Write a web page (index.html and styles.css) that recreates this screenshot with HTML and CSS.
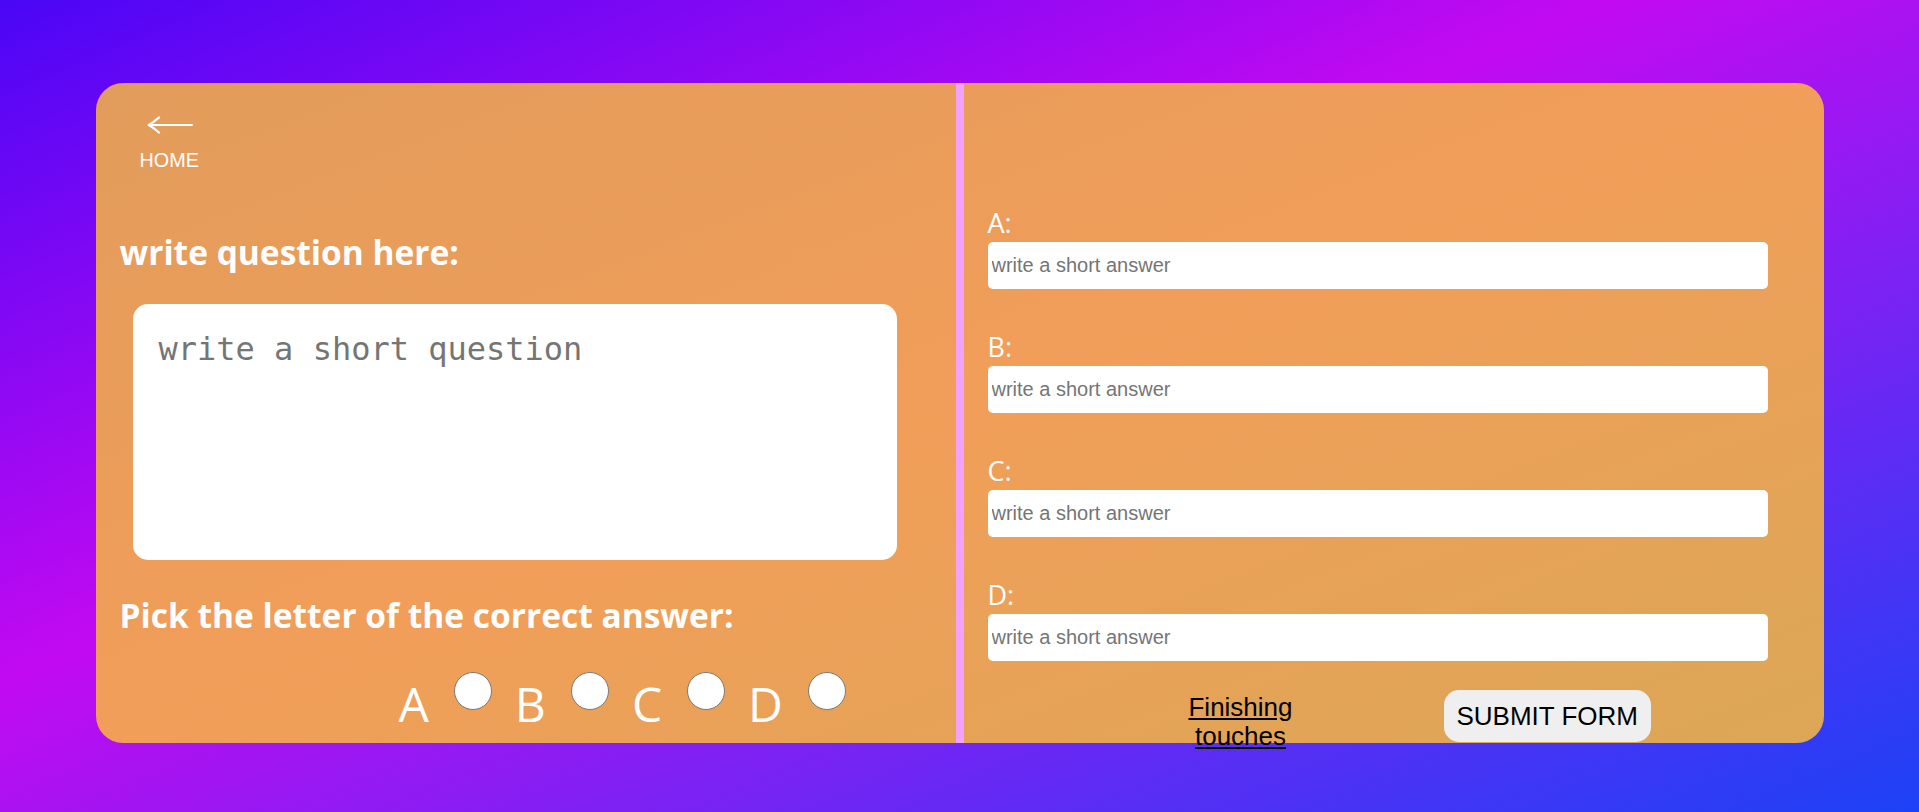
FILE: index.html
```html
<!DOCTYPE html>
<html lang="en">
<head>
<meta charset="utf-8">
<title>Create question</title>
<link rel="stylesheet" href="styles.css">
</head>
<body>
<div class="page">
  <form class="card">
    <section class="panel panel-left">
      <a class="home" href="#">
        <svg class="home-arrow" width="48" height="20" viewBox="0 0 48 20" aria-hidden="true">
          <path d="M2 9.5 H47" fill="none" stroke="#fff" stroke-width="2.3" stroke-linecap="round"/>
          <path d="M12.5 1.5 Q7 6.5 1.6 9.5 Q7 12.5 12.5 17.5" fill="none" stroke="#fff" stroke-width="2.3" stroke-linecap="round" stroke-linejoin="round"/>
        </svg>
        <span class="home-text">HOME</span>
      </a>
      <h2 class="heading heading-question">write question here:</h2>
      <textarea class="question" placeholder="write a short question"></textarea>
      <h2 class="heading heading-pick">Pick the letter of the correct answer:</h2>
      <div class="choices">
        <label class="choice"><span class="choice-letter">A</span><input class="choice-radio" type="radio" name="correct" value="A"></label>
        <label class="choice"><span class="choice-letter">B</span><input class="choice-radio" type="radio" name="correct" value="B"></label>
        <label class="choice"><span class="choice-letter">C</span><input class="choice-radio" type="radio" name="correct" value="C"></label>
        <label class="choice"><span class="choice-letter">D</span><input class="choice-radio" type="radio" name="correct" value="D"></label>
      </div>
    </section>
    <section class="panel panel-right">
      <div class="answer">
        <label class="answer-label">A:</label>
        <input class="answer-input" type="text" placeholder="write a short answer">
      </div>
      <div class="answer">
        <label class="answer-label">B:</label>
        <input class="answer-input" type="text" placeholder="write a short answer">
      </div>
      <div class="answer">
        <label class="answer-label">C:</label>
        <input class="answer-input" type="text" placeholder="write a short answer">
      </div>
      <div class="answer">
        <label class="answer-label">D:</label>
        <input class="answer-input" type="text" placeholder="write a short answer">
      </div>
      <div class="actions">
        <a class="finish" href="#">Finishing touches</a>
        <button class="submit" type="button">SUBMIT FORM</button>
      </div>
    </section>
  </form>
</div>
</body>
</html>
```

FILE: styles.css
```css
* {
  box-sizing: border-box;
}

html, body {
  margin: 0;
  padding: 0;
}

body {
  min-height: 812px;
  background: linear-gradient(to bottom right, #4a06f6 0%, #c20af1 42%, #1c42f6 100%);
  font-family: "Open Sans", "Noto Sans", sans-serif;
  overflow: hidden;
}

.page {
  padding-top: 83px;
}

.card {
  display: flex;
  width: 1728px;
  height: 660px;
  margin: 0 auto;
  border-radius: 27px;
  background: linear-gradient(to bottom right, #e29c5b 0%, #f19e59 50%, #dba756 100%);
}

.panel {
  flex: none;
}

.panel-left {
  width: 868px;
  border-right: 8px solid #f2a2fb;
  padding: 33px 24px 0 24px;
}

.home {
  display: inline-flex;
  flex-direction: column;
  align-items: center;
  gap: 14px;
  margin-left: 20px;
  color: #fff;
  text-decoration: none;
}

.home-arrow {
  display: block;
  height: 19px;
  width: 48px;
  margin-left: 2px;
}

.home-text {
  font-family: "Liberation Sans", Arial, sans-serif;
  font-size: 19.8px;
  line-height: 22px;
}

.heading {
  margin: 0;
  color: #fff;
  font-family: "Open Sans", "Noto Sans", sans-serif;
  font-weight: 700;
  font-size: 33.5px;
  line-height: 40px;
}

.heading-question {
  margin-top: 61px;
}

.question {
  display: block;
  width: 764px;
  height: 256px;
  margin: 32px 0 0 13px;
  padding: 25px 24px 22px 26px;
  border: none;
  border-radius: 15px;
  background: #fff;
  font-family: "DejaVu Sans Mono", monospace;
  font-size: 32px;
  line-height: 40px;
  color: #333;
  resize: none;
  outline: none;
}

.question::placeholder {
  color: #757575;
}

.heading-pick {
  margin-top: 35px;
}

.choices {
  display: flex;
  align-items: flex-start;
  margin-top: 37px;
  padding-left: 279px;
}

.choice {
  display: flex;
  align-items: flex-start;
  margin-right: 23px;
}

.choice-letter {
  margin-top: 8px;
  color: #fff;
  font-family: "Open Sans", "Noto Sans", sans-serif;
  font-size: 48px;
  line-height: 48px;
}

.choice-radio {
  appearance: none;
  -webkit-appearance: none;
  width: 38px;
  height: 38px;
  margin: 0 0 0 25px;
  border: 1.5px solid #7a7a7a;
  border-radius: 50%;
  background: #fff;
}

.choice-radio:checked {
  background: radial-gradient(circle, #0b57d0 0 45%, #fff 48%);
}

.panel-right {
  width: 860px;
  padding: 124px 56px 0 24px;
}

.answer {
  display: flex;
  flex-direction: column;
  align-items: flex-start;
  margin-bottom: 42px;
}

.answer-label {
  color: #fff;
  font-family: "Open Sans", "Noto Sans", sans-serif;
  font-size: 27px;
  line-height: 31px;
  margin-bottom: 4px;
}

.answer-input {
  display: block;
  width: 780px;
  height: 47px;
  padding: 0 4px;
  border: none;
  border-radius: 5px;
  background: #fff;
  font-family: "Liberation Sans", Arial, sans-serif;
  font-size: 20px;
  color: #333;
  outline: none;
}

.answer-input::placeholder {
  color: #757575;
}

.actions {
  display: flex;
  align-items: flex-start;
  margin-top: -13px;
  padding-left: 193px;
}

.finish {
  display: block;
  width: 120px;
  margin-top: 3px;
  text-align: center;
  color: #000;
  font-family: "Liberation Sans", Arial, sans-serif;
  font-size: 26px;
  line-height: 29px;
  text-decoration: underline;
}

.submit {
  height: 52px;
  margin-left: 143px;
  padding: 0 13px;
  border: none;
  border-radius: 15px;
  background: #efefef;
  color: #000;
  font-family: "Liberation Sans", Arial, sans-serif;
  font-size: 26px;
  line-height: 30px;
  cursor: pointer;
}
```
